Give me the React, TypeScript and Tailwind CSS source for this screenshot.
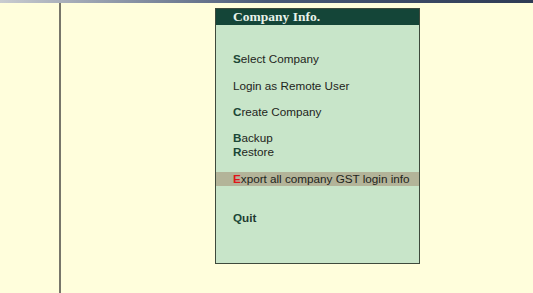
export default function App() {
  const items: { key: string; first: string; rest: string; gap: string; red?: boolean; bold?: boolean; plain?: boolean; active?: boolean }[] = [
    { key: 'select', first: 'S', rest: 'elect Company', gap: 'mt-[27px]' },
    { key: 'login', first: 'L', rest: 'ogin as Remote User', gap: 'mt-[13px]', plain: true },
    { key: 'create', first: 'C', rest: 'reate Company', gap: 'mt-[12px]' },
    { key: 'backup', first: 'B', rest: 'ackup', gap: 'mt-[12px]' },
    { key: 'restore', first: 'R', rest: 'estore', gap: 'mt-0' },
    { key: 'export', first: 'E', rest: 'xport all company GST login info', gap: 'mt-[13px]', red: true, active: true },
    { key: 'quit', first: 'Q', rest: 'uit', gap: 'mt-[25px]', bold: true },
  ];

  return (
    <div className="w-[533px] h-[293px] bg-[#fffedc] flex flex-col overflow-hidden">
      {/* top strip */}
      <div className="h-[3px] bg-gradient-to-r from-[#c9ccd0] via-[#4a5a78] to-[#2e3b55] shrink-0" />

      <div className="flex flex-1">
        <div className="w-[59px]" />
        <div className="w-[2px] bg-[#77766a]" />

        <div className="flex-1">
          <div className="ml-[154px] mt-[5px] w-[205px] h-[256px] border border-[#3e4a3c] bg-[#c8e5c9] flex flex-col">
            <div className="h-[16px] bg-[#144538] flex items-center pl-[17px]">
              <span className="text-[13.5px] font-bold text-[#e8f2ea] leading-none" style={{ fontFamily: '"Liberation Serif", "Times New Roman", serif' }}>
                Company Info.
              </span>
            </div>

            <div className="flex flex-col" style={{ fontFamily: '"Liberation Sans", Arial, sans-serif' }}>
              {items.map((it) => (
                <div
                  key={it.key}
                  className={`${it.gap} h-[14px] pl-[17px] flex items-center text-[11.7px] leading-none ${it.active ? 'bg-[#b3b499]' : ''} ${it.bold ? 'font-bold text-[#233a30]' : 'text-[#1e2420]'}`}
                >
                  <span className={`${it.plain ? '' : 'font-bold'} ${it.red ? 'text-[#e0161b]' : it.plain ? '' : 'text-[#1b4737]'}`}>{it.first}</span>
                  <span>{it.rest}</span>
                </div>
              ))}
            </div>
          </div>
        </div>
      </div>
    </div>
  );
}
